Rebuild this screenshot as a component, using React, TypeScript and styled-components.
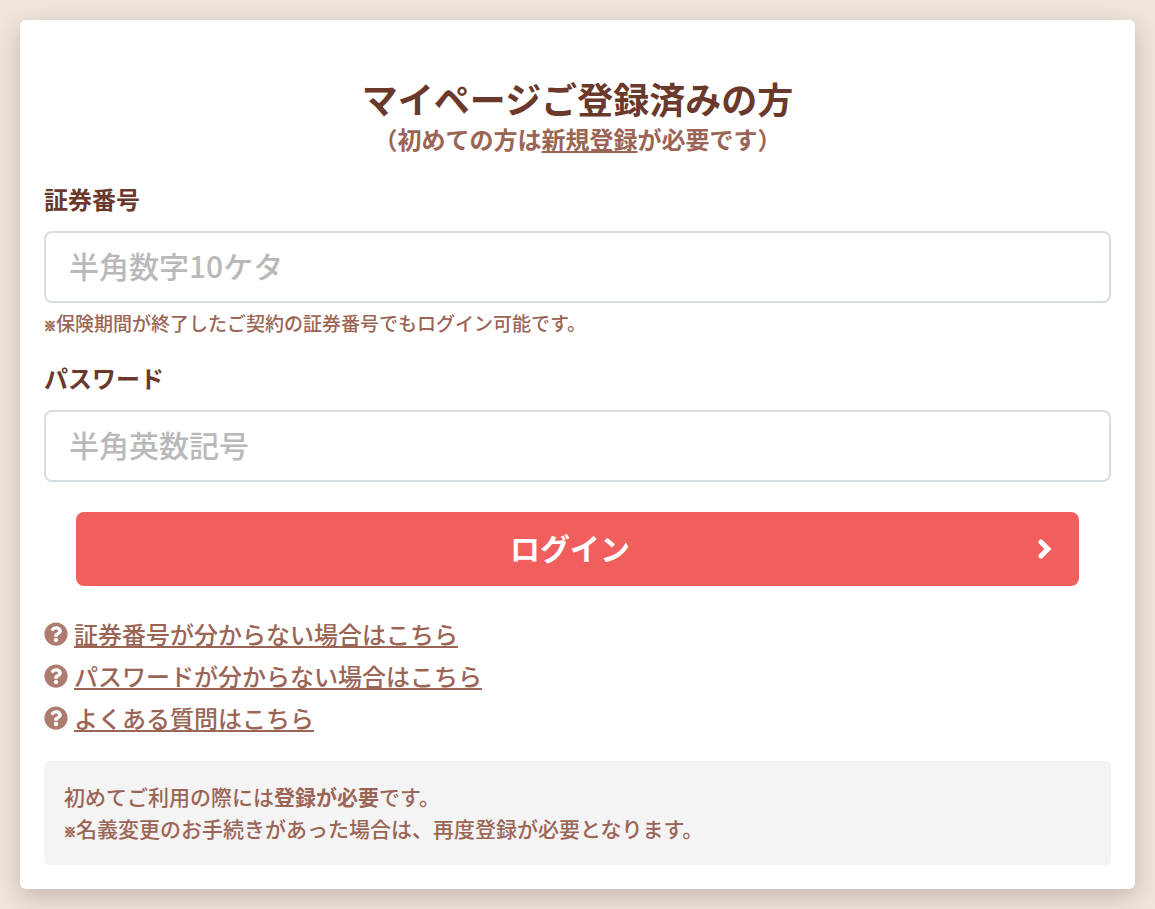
import React from "react";
import styled, { createGlobalStyle } from "styled-components";
import { FaQuestionCircle } from "react-icons/fa";

const color = {
  page: "#efe6dc",
  dark: "#6b392b",
  brown: "#9b6556",
  icon: "#ad7c71",
  border: "#d8dde2",
  placeholder: "#b9b9b9",
  button: "#f15e5e",
  note: "#f4f4f4",
};

const GlobalStyle = createGlobalStyle`
  *, *::before, *::after { box-sizing: border-box; }
  body {
    margin: 0;
    background: ${color.page};
    color: ${color.brown};
    font-family: "Noto Sans CJK JP", sans-serif;
    font-weight: 500;
  }
`;

const Page = styled.main`
  padding: 20px;
`;

const Card = styled.form`
  display: flex;
  flex-direction: column;
  padding: 56px 24px 24px;
  border-radius: 6px;
  background: #fff;
  box-shadow: 0 8px 24px rgba(80, 45, 40, 0.26);
`;

const Heading = styled.header`
  text-align: center;
`;

const Title = styled.h1`
  margin: 0;
  color: ${color.dark};
  font-size: 36px;
  line-height: 44px;
  font-weight: 700;
`;

const Subtitle = styled.p`
  margin: 0;
  font-size: 24px;
  line-height: 38px;
  font-weight: 700;
`;

const Link = styled.a`
  color: inherit;
  text-decoration: underline;
  text-decoration-thickness: 2px;
  text-decoration-skip-ink: none;
  text-underline-offset: 2px;
`;

const Field = styled.div`
  display: flex;
  flex-direction: column;
  margin-top: 23px;
`;

const Label = styled.label`
  margin-bottom: 14px;
  color: ${color.dark};
  font-size: 24px;
  line-height: 36px;
  font-weight: 700;
`;

const Input = styled.input`
  width: 100%;
  height: 72px;
  padding: 0 23px 4px;
  border: 2px solid ${color.border};
  border-radius: 8px;
  background: #fff;
  color: ${color.dark};
  font-family: inherit;
  font-size: 30px;
  font-weight: 500;

  &::placeholder {
    color: ${color.placeholder};
    opacity: 1;
  }
`;

const Hint = styled.p`
  margin: 6px 0 0;
  font-size: 19px;
  line-height: 28px;
`;

const Mark = styled.span`
  font-size: 12px;
  line-height: 1;
  font-weight: 700;
  -webkit-text-stroke: 1px currentColor;
`;

const LoginButton = styled.button`
  display: flex;
  align-items: center;
  height: 74px;
  margin: 30px 32px 0;
  padding: 0 27px 0 0;
  border: 0;
  border-radius: 8px;
  background: ${color.button};
  color: #fff;
  font-family: inherit;
  font-size: 30px;
  font-weight: 700;
  cursor: pointer;
`;

const ButtonText = styled.span`
  flex: 1;
  padding: 0 0 4px 26px;
`;

const HelpList = styled.ul`
  margin: 27px 0 0;
  padding: 0;
  list-style: none;
`;

const HelpItem = styled.li`
  display: flex;
  align-items: center;
  gap: 6px;
  font-size: 24px;
  line-height: 42px;

  svg {
    color: ${color.icon};
  }
`;

const Note = styled.aside`
  margin-top: 22px;
  padding: 19px 20px 21px;
  border-radius: 5px;
  background: ${color.note};
  font-size: 21px;
  line-height: 32px;

  p {
    margin: 0;
  }
`;

const helpLinks = [
  "証券番号が分からない場合はこちら",
  "パスワードが分からない場合はこちら",
  "よくある質問はこちら",
];

function Chevron() {
  return (
    <svg width="14" height="20" viewBox="0 0 14 20" aria-hidden="true">
      <path
        d="M3 3l7 7-7 7"
        fill="none"
        stroke="#fff"
        strokeWidth="5"
        strokeLinecap="round"
        strokeLinejoin="miter"
      />
    </svg>
  );
}

export default function App() {
  return (
    <>
      <GlobalStyle />
      <Page>
        <Card onSubmit={(e) => e.preventDefault()}>
          <Heading>
            <Title>マイページご登録済みの方</Title>
            <Subtitle>
              （初めての方は<Link href="#register">新規登録</Link>が必要です）
            </Subtitle>
          </Heading>
          <Field>
            <Label htmlFor="policy">証券番号</Label>
            <Input id="policy" type="text" inputMode="numeric" placeholder="半角数字10ケタ" />
            <Hint>
              <Mark>※</Mark>保険期間が終了したご契約の証券番号でもログイン可能です。
            </Hint>
          </Field>
          <Field>
            <Label htmlFor="password">パスワード</Label>
            <Input id="password" type="password" placeholder="半角英数記号" />
          </Field>
          <LoginButton type="submit">
            <ButtonText>ログイン</ButtonText>
            <Chevron />
          </LoginButton>
          <HelpList>
            {helpLinks.map((text) => (
              <HelpItem key={text}>
                <FaQuestionCircle size={24} aria-hidden="true" />
                <Link href="#help">{text}</Link>
              </HelpItem>
            ))}
          </HelpList>
          <Note>
            <p>
              初めてご利用の際には<strong>登録が必要</strong>です。
            </p>
            <p>
              <Mark>※</Mark>名義変更のお手続きがあった場合は、再度登録が必要となります。
            </p>
          </Note>
        </Card>
      </Page>
    </>
  );
}
